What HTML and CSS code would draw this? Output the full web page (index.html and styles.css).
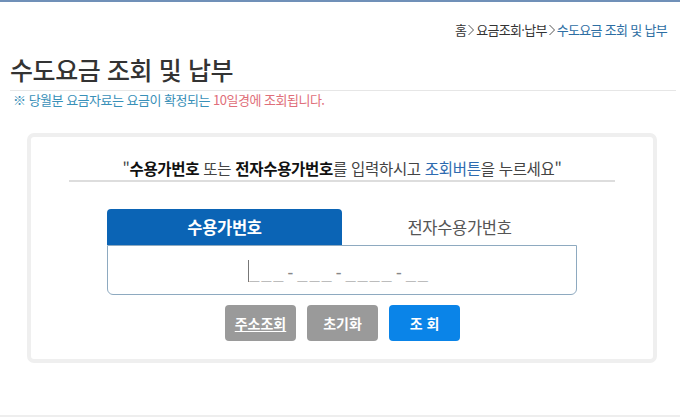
FILE: index.html
```html
<!DOCTYPE html>
<html lang="ko">
<head>
<meta charset="utf-8">
<link rel="stylesheet" href="styles.css">
</head>
<body>
<div class="topbar"></div>
<div class="breadcrumb">홈<svg class="sep" width="8" height="12" viewBox="0 0 8 12"><path d="M1.5 1 L6.5 6 L1.5 11" fill="none" stroke="#555" stroke-width="1"/></svg>요금조회·납부<svg class="sep" width="8" height="12" viewBox="0 0 8 12"><path d="M1.5 1 L6.5 6 L1.5 11" fill="none" stroke="#555" stroke-width="1"/></svg><span class="current">수도요금 조회 및 납부</span></div>
<h1 class="title">수도요금 조회 및 납부</h1>
<p class="notice">※ 당월분 요금자료는 요금이 확정되는 <span class="red">10일경에 조회됩니다.</span></p>
<div class="box">
  <p class="guide">"<b>수용가번호</b> 또는 <b>전자수용가번호</b>를 입력하시고 <span class="blue">조회버튼</span>을 누르세요"</p>
  <div class="form">
    <div class="tabs">
      <div class="tab active">수용가번호</div>
      <div class="tab">전자수용가번호</div>
    </div>
    <div class="input"><span class="caret"></span>___-___-____-__</div>
  </div>
  <div class="buttons">
    <button class="btn gray"><u>주소조회</u></button>
    <button class="btn gray">초기화</button>
    <button class="btn blue-btn">조 회</button>
  </div>
</div>
<div class="footer-line"></div>
</body>
</html>
```
FILE: styles.css
```css
* { box-sizing: border-box; }
html, body { margin: 0; padding: 0; background: #fff; }
body {
  font-family: "Noto Sans CJK KR", "Noto Sans", sans-serif;
  color: #333;
  width: 680px;
  height: 420px;
  overflow: hidden;
  position: relative;
}
.topbar { height: 2px; background: #7090b8; }
.breadcrumb {
  margin-top: 18px;
  display: flex;
  justify-content: flex-end;
  align-items: center;
  padding-right: 13px;
  font-size: 13px;
  line-height: 20px;
  letter-spacing: -0.7px;
  color: #333;
}
.breadcrumb .sep { margin: 0 1px; }
.breadcrumb .current { color: #2d6ea3; }
.title {
  margin: 13px 4px 0 10px;
  font-size: 25px;
  font-weight: 500;
  line-height: 32px;
  letter-spacing: -0.4px;
  color: #333;
  padding-bottom: 5px;
  border-bottom: 1px solid #e6e6e6;
}
.notice {
  margin: 0 0 0 13px;
  font-size: 13px;
  line-height: 18px;
  letter-spacing: -0.5px;
  color: #3990b8;
}
.notice .red { color: #df6f7a; }
.box {
  margin: 24px 23px 0 27px;
  height: 230px;
  border: 4px solid #efefef;
  border-radius: 7px;
  padding-top: 20px;
}
.guide {
  margin: 0 38px;
  text-align: center;
  font-size: 15.5px;
  line-height: 22px;
  letter-spacing: -0.3px;
  color: #444;
  padding-bottom: 1px;
  border-bottom: 2px solid #ddd;
}
.guide b { color: #111; font-weight: 700; }
.guide .blue { color: #2e6bb0; }
.form {
  margin: 27px 0 0 76px;
  width: 470px;
}
.tabs { display: flex; height: 36px; }
.tab {
  width: 235px;
  text-align: center;
  font-size: 16.5px;
  line-height: 36px;
  color: #555;
  letter-spacing: -0.3px;
}
.tab.active {
  background: #0b64b5;
  color: #fff;
  font-weight: 700;
  border-radius: 4px 4px 0 0;
}
.input {
  height: 50px;
  border: 1px solid #8eaac0;
  border-radius: 0 0 6px 6px;
  display: flex;
  align-items: center;
  justify-content: center;
  font-family: "DejaVu Sans Mono", monospace;
  font-size: 17px;
  letter-spacing: 1.8px;
  color: #888;
  padding-top: 4px;
  padding-right: 6px;
}
.caret {
  display: inline-block;
  width: 1px;
  height: 22px;
  background: #777;
  margin-bottom: 2px;
}
.buttons {
  display: flex;
  justify-content: center;
  gap: 11px;
  margin-top: 10px;
  margin-left: 1px;
}
.btn {
  width: 71px;
  height: 36px;
  border: 0;
  border-radius: 4px;
  color: #fff;
  font-family: "Noto Sans CJK KR", sans-serif;
  font-size: 14px;
  font-weight: 700;
  padding: 0;
}
.btn u { text-underline-offset: 2px; }
.btn.gray { background: #9a9a9a; }
.btn.blue-btn { background: #0a84e8; }
.footer-line {
  position: absolute;
  left: 0;
  right: 0;
  top: 415px;
  height: 2px;
  background: #eeeeee;
}
```
